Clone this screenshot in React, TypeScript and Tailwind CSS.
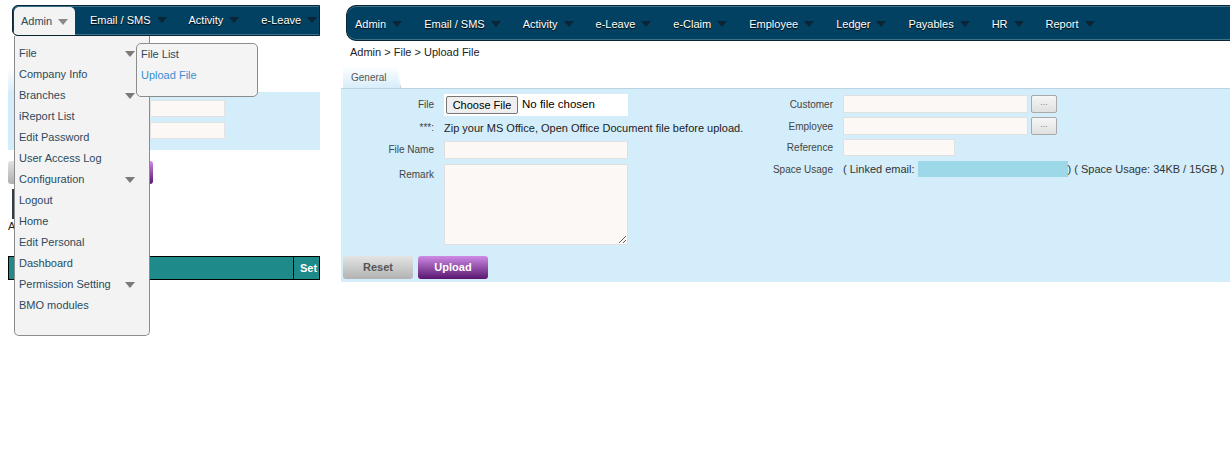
import React from 'react';

const Caret = ({ color, className = '' }: { color: string; className?: string }) => (
  <svg width="10" height="6" viewBox="0 0 10 6" className={`shrink-0 ${className}`}>
    <polygon points="0,0 10,0 5,6" fill={color} />
  </svg>
);

const rightNav = ['Admin', 'Email / SMS', 'Activity', 'e-Leave', 'e-Claim', 'Employee', 'Ledger', 'Payables', 'HR', 'Report'];

const menuItems: [string, boolean][] = [
  ['File', true],
  ['Company Info', false],
  ['Branches', true],
  ['iReport List', false],
  ['Edit Password', false],
  ['User Access Log', false],
  ['Configuration', true],
  ['Logout', false],
  ['Home', false],
  ['Edit Personal', false],
  ['Dashboard', false],
  ['Permission Setting', true],
  ['BMO modules', false],
];

const navBar =
  'bg-[#024161] border border-[#0a2636] shadow-[inset_0_1px_0_#3b7285,inset_0_-1px_0_#3b7285] text-white text-[11px] whitespace-nowrap overflow-hidden [text-shadow:0_1px_1px_#000]';

const navCaret = '#0b2535';

function LeftShot() {
  return (
    <div className="relative w-[320px] h-[342px] shrink-0">
      {/* top nav */}
      <div className="pt-[5px] pl-[12px]">
        <div className={`${navBar} h-[31px] flex items-end rounded-l-[6px]`}>
          <div className="ml-[1px] h-[28px] w-[61px] shrink-0 bg-[#f3f3f3] rounded-t-[5px] flex items-center pl-[7px] pt-[1px] text-[#2c4a5c] [text-shadow:none]">
            <span>Admin</span>
            <Caret color="#8a8a8a" className="ml-[6px]" />
          </div>
          {['Email / SMS', 'Activity', 'e-Leave'].map((t, i) => (
            <div key={t} className={`h-full shrink-0 flex items-center mr-[22px] pb-[1px] ${i === 0 ? 'ml-[15px]' : ''}`}>
              <span>{t}</span>
              <Caret color={navCaret} className="ml-[6px]" />
            </div>
          ))}
        </div>
      </div>

      {/* page behind the menu */}
      <div className="pl-[8px]">
        <div className="mt-[32px] h-[24px] w-[58px] bg-gradient-to-b from-white to-[#d7edfa] border-r border-[#c4d6e2]" />
        <div className="h-[58px] bg-[#d3edfb] pt-[8px] pl-[142px] flex flex-col gap-[5px]">
          <div className="h-[17px] w-[75px] bg-[#fbf8f6] border border-[#e2e2e2]" />
          <div className="h-[17px] w-[75px] bg-[#fbf8f6] border border-[#e2e2e2]" />
        </div>
        <div className="mt-[11px] flex gap-[5px]">
          <div className="w-[70px] h-[23px] rounded-[3px] bg-gradient-to-b from-[#e2e2e2] to-[#b0b0b0]" />
          <div className="w-[70px] h-[23px] rounded-[3px] bg-gradient-to-b from-[#cf8be6] to-[#5a1370]" />
        </div>
        <div className="ml-[4px] mt-[5px] w-[2px] h-[30px] bg-[#2c3e48]" />
        <div className="mt-[1px] text-[11px] leading-[12px] text-[#222]">A</div>
        <div className="mt-[24px] h-[24px] border border-black bg-[#1f8a8a] flex justify-end">
          <div className="w-[26px] border-l border-black text-white font-bold text-[11px] flex items-center pl-[6px]">
            Set
          </div>
        </div>
      </div>

      {/* dropdown */}
      <div className="absolute left-[14px] top-[36px] w-[136px] h-[300px] bg-[#f3f3f3] border border-t-0 border-[#8c8c8c] rounded-b-[5px] pt-[7px]">
        {menuItems.map(([t, sub]) => (
          <div key={t} className="h-[21px] flex items-center justify-between pl-[4px] pr-[14px] text-[11px] text-[#2c4a5c]">
            <span>{t}</span>
            {sub && <Caret color="#7a7a7a" />}
          </div>
        ))}
      </div>

      {/* submenu */}
      <div className="absolute left-[136px] top-[43px] w-[122px] h-[54px] bg-[#f4f4f4] border border-[#8c8c8c] rounded-[5px] pl-[4px] text-[11px]">
        <div className="h-[21px] flex items-center text-[#2c4a5c]">File List</div>
        <div className="h-[21px] flex items-center text-[#3b8fd0]">Upload File</div>
      </div>
    </div>
  );
}

function RightShot() {
  const input = 'bg-[#fbf8f6] border border-[#e0e0e0] outline-none';
  const label = 'text-[10px] text-[#444] text-right';
  return (
    <div className="flex-1 ml-[21px] flex flex-col">
      <div className="pt-[5px] pl-[5px]">
        <div className={`${navBar} h-[36px] rounded-l-[10px] border-r-0 flex items-center pl-[8px] pt-[2px]`}>
          {rightNav.map((t) => (
            <div key={t} className="flex items-center shrink-0 mr-[22px]">
              <span>{t}</span>
              <Caret color={navCaret} className="ml-[6px]" />
            </div>
          ))}
        </div>
      </div>

      <div className="mt-[3px] pl-[9px] h-[16px] flex items-center text-[11px] text-[#222]">
        Admin &gt; File &gt; Upload File
      </div>

      <div className="mt-[6px] h-[22px] pl-[2px] flex">
        <div className="w-[58px] h-full bg-gradient-to-b from-white to-[#d7edfa] border-r border-[#b8cbd8] [clip-path:polygon(0_0,92%_0,100%_100%,0_100%)] flex items-center pl-[8px] text-[10px] text-[#555]">
          General
        </div>
      </div>

      <div className="h-[194px] bg-[#d3edfb] border-t border-[#bcd3e2] flex flex-col">
        <div className="flex">
          {/* left column */}
          <div className="w-[402px] pt-[5px]">
            <div className="grid grid-cols-[93px_1fr] gap-x-[10px] items-start">
              <div className={`${label} h-[22px] leading-[22px]`}>File</div>
              <div className="w-[184px] h-[22px] bg-white flex items-center pl-[2px]">
                <div className="w-[72px] h-[18px] border border-[#767676] bg-[#efefef] rounded-[2px] text-[11px] text-black flex items-center justify-center">
                  Choose File
                </div>
                <span className="ml-[4px] text-[11.5px] text-black">No file chosen</span>
              </div>

              <div className={`${label} h-[24px] leading-[24px]`}>***:</div>
              <div className="h-[24px] leading-[24px] text-[11px] text-[#222] whitespace-nowrap">
                Zip your MS Office, Open Office Document file before upload.
              </div>

              <div className={`${label} h-[18px] leading-[18px] mt-[1px]`}>File Name</div>
              <input className={`${input} w-[184px] h-[18px] mt-[1px]`} />

              <div className={`${label} mt-[5px] pt-[3px]`}>Remark</div>
              <textarea className={`${input} w-[184px] h-[81px] mt-[5px] block`} />
            </div>
          </div>

          {/* right column */}
          <div className="pt-[6px]">
            <div className="grid grid-cols-[90px_auto] gap-x-[10px] gap-y-[4px] items-center">
              <div className={label}>Customer</div>
              <div className="flex items-center gap-[3px]">
                <input className={`${input} w-[185px] h-[18px]`} />
                <div className="w-[26px] h-[18px] border border-[#a8a8a8] rounded-[2px] bg-gradient-to-b from-[#f6f6f6] to-[#e0e0e0] text-[9px] text-[#888] flex items-center justify-center leading-none pb-[3px]">
                  ...
                </div>
              </div>
              <div className={label}>Employee</div>
              <div className="flex items-center gap-[3px]">
                <input className={`${input} w-[185px] h-[18px]`} />
                <div className="w-[26px] h-[18px] border border-[#a8a8a8] rounded-[2px] bg-gradient-to-b from-[#f6f6f6] to-[#e0e0e0] text-[9px] text-[#888] flex items-center justify-center leading-none pb-[3px]">
                  ...
                </div>
              </div>
              <div className={label}>Reference</div>
              <input className={`${input} w-[112px] h-[17px]`} />
              <div className={`${label} mt-[1px]`}>Space Usage</div>
              <div className="flex items-center text-[11px] text-[#333] whitespace-nowrap mt-[1px]">
                <span>( Linked email:</span>
                <span className="ml-[3px] w-[150px] h-[16px] bg-[#9dd8e9]" />
                <span>) ( Space Usage: 34KB / 15GB )</span>
              </div>
            </div>
          </div>
        </div>

        <div className="mt-[11px] pl-[2px] flex gap-[5px]">
          <div className="w-[70px] h-[23px] rounded-[3px] bg-gradient-to-b from-[#e4e4e4] to-[#b2b2b2] text-[11px] font-bold text-[#555] flex items-center justify-center">
            Reset
          </div>
          <div className="w-[70px] h-[23px] rounded-[3px] bg-gradient-to-b from-[#cf8be6] to-[#5a1370] text-[11px] font-bold text-white flex items-center justify-center">
            Upload
          </div>
        </div>
      </div>
    </div>
  );
}

export default function App() {
  return (
    <div className="w-[1230px] h-[468px] bg-white flex overflow-hidden font-['Liberation_Sans',Arial,sans-serif]">
      <LeftShot />
      <RightShot />
    </div>
  );
}
